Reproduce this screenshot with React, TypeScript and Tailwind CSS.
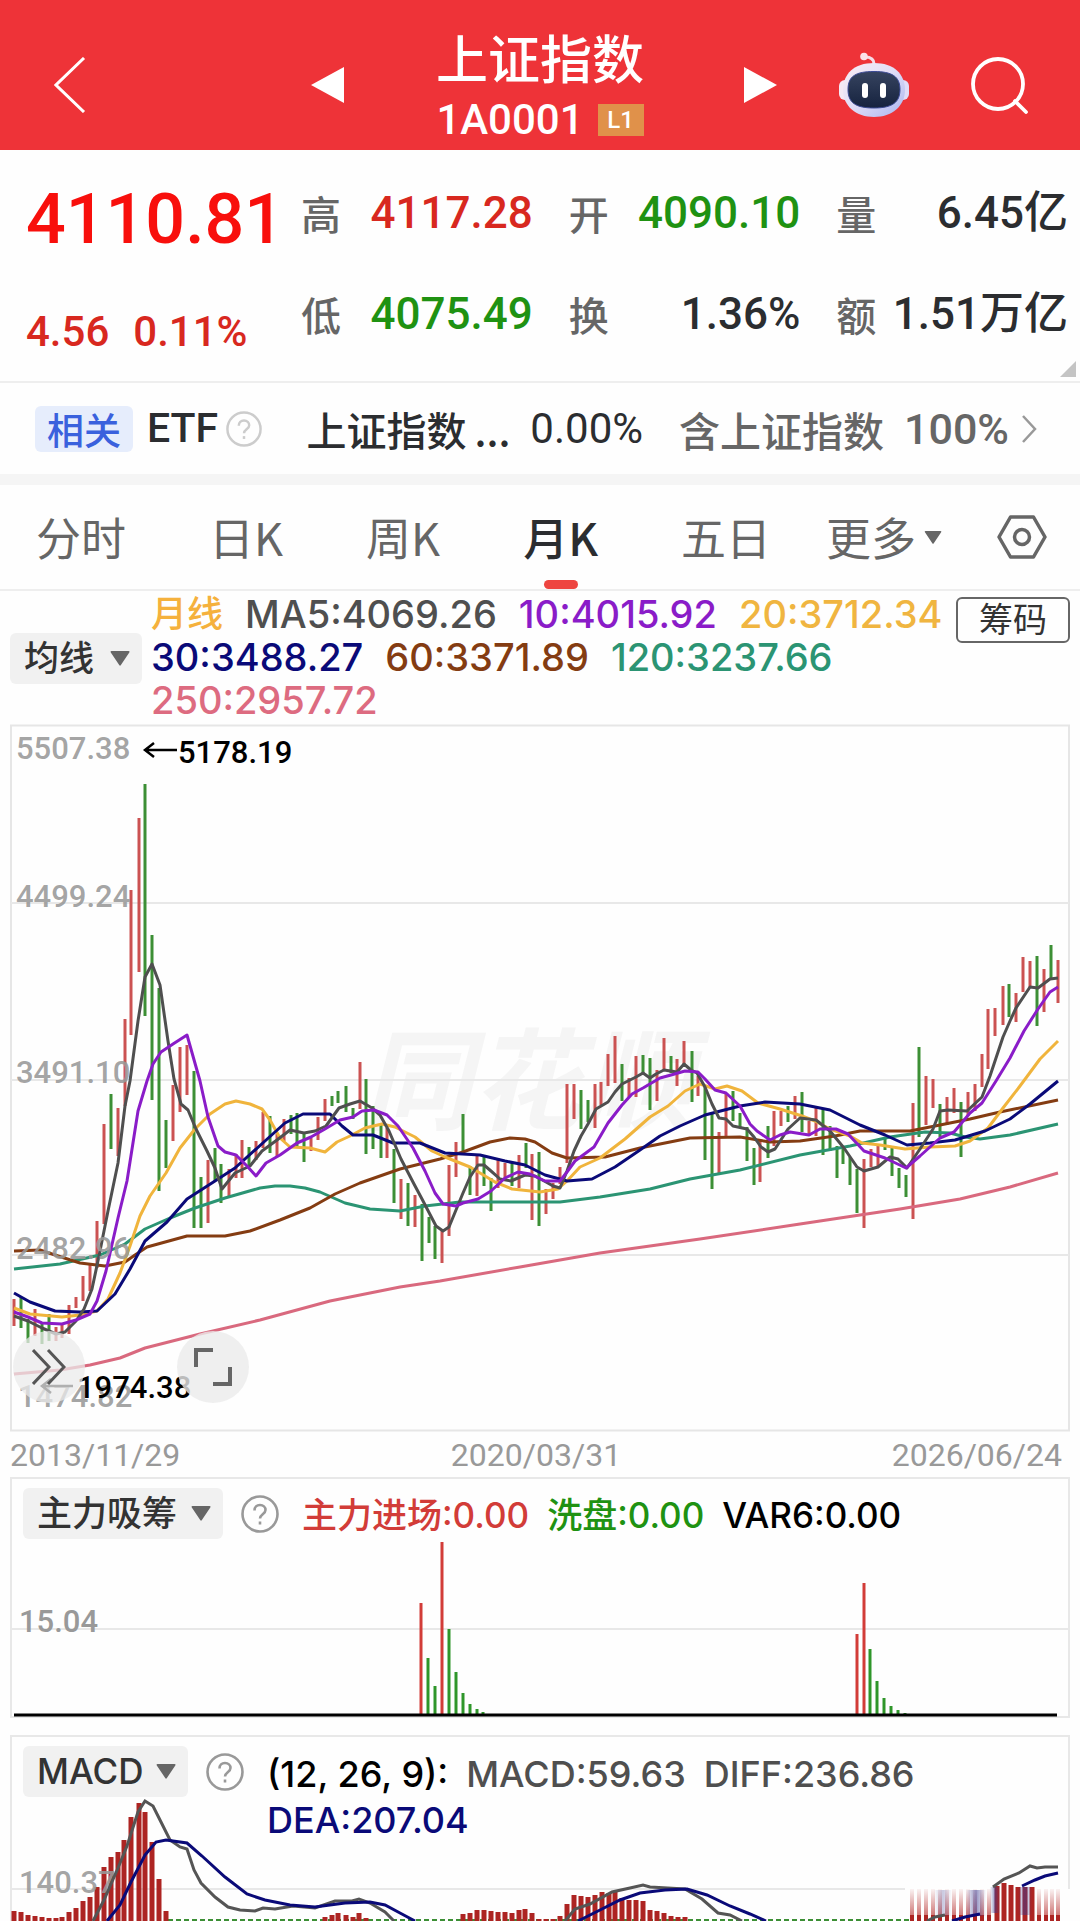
import type { ReactNode } from "react";

const DIN = "font-['Roboto','Noto_Sans_CJK_SC',sans-serif]";
const SANS = "font-['Inter','Noto_Sans_CJK_SC',sans-serif]";
const HAN = "font-['Noto_Sans_CJK_SC',sans-serif]";

type Bar = [x: number, top: number, bottom: number];
type Spike = [x: number, top: number];

const quotes = [
  { label: "高", value: "4117.28", color: "text-[#d8281f]" },
  { label: "开", value: "4090.10", color: "text-[#1f9212]" },
  { label: "量", value: "6.45亿", color: "text-[#2b2d30]" },
  { label: "低", value: "4075.49", color: "text-[#1f9212]" },
  { label: "换", value: "1.36%", color: "text-[#2b2d30]" },
  { label: "额", value: "1.51万亿", color: "text-[#2b2d30]" },
];

const tabs = ["分时", "日K", "周K", "月K", "五日"];

const upBars: Bar[] = [
  [14, 1298, 1325], [35, 1308, 1335], [56, 1326, 1340], [62, 1322, 1337], [69, 1304, 1333], [76, 1296, 1307],
  [83, 1275, 1300], [90, 1262, 1290], [97, 1220, 1267], [104, 1123, 1223], [118, 1107, 1155], [125, 1018, 1105],
  [131, 889, 1034], [139, 817, 971], [173, 1084, 1140], [180, 1046, 1111], [187, 1044, 1094], [208, 1159, 1222],
  [229, 1168, 1196], [236, 1153, 1177], [242, 1139, 1177], [256, 1140, 1159], [263, 1111, 1147], [277, 1133, 1155],
  [284, 1118, 1140], [311, 1137, 1150], [318, 1116, 1139], [325, 1098, 1120], [360, 1061, 1108], [387, 1127, 1157],
  [401, 1178, 1218], [415, 1194, 1226], [442, 1230, 1262], [449, 1164, 1235], [456, 1141, 1176], [477, 1155, 1195],
  [498, 1157, 1187], [505, 1162, 1180], [519, 1154, 1187], [532, 1153, 1219], [546, 1188, 1213], [553, 1182, 1198],
  [560, 1166, 1183], [567, 1083, 1162], [574, 1083, 1118], [595, 1083, 1127], [601, 1081, 1104], [608, 1053, 1085],
  [615, 1035, 1082], [629, 1077, 1096], [636, 1055, 1096], [657, 1069, 1100], [664, 1037, 1070], [677, 1058, 1085],
  [684, 1040, 1066], [698, 1075, 1095], [719, 1131, 1172], [726, 1092, 1135], [760, 1140, 1181], [774, 1110, 1145],
  [781, 1110, 1125], [795, 1095, 1118], [809, 1120, 1135], [816, 1107, 1135], [864, 1158, 1227], [871, 1148, 1166],
  [878, 1145, 1166], [913, 1102, 1218], [926, 1075, 1124], [933, 1078, 1107], [947, 1096, 1124], [954, 1087, 1112],
  [968, 1091, 1115], [975, 1083, 1110], [982, 1053, 1086], [988, 1008, 1068], [995, 1007, 1035], [1003, 985, 1024],
  [1016, 992, 1021], [1023, 956, 991], [1030, 960, 987], [1044, 968, 1011], [1058, 959, 1002],
];

const downBars: Bar[] = [
  [21, 1296, 1327], [28, 1318, 1342], [42, 1322, 1343], [49, 1313, 1340], [111, 1093, 1148], [145, 783, 1015],
  [152, 934, 1099], [159, 987, 1190], [166, 1119, 1167], [194, 1070, 1227], [201, 1176, 1227], [215, 1147, 1180],
  [221, 1163, 1202], [249, 1146, 1165], [270, 1115, 1152], [291, 1114, 1133], [297, 1112, 1147], [304, 1133, 1161],
  [332, 1095, 1105], [338, 1090, 1102], [346, 1085, 1111], [353, 1107, 1118], [366, 1078, 1153], [373, 1105, 1148],
  [381, 1124, 1157], [394, 1148, 1202], [408, 1182, 1225], [422, 1203, 1260], [429, 1216, 1242], [435, 1225, 1258],
  [463, 1113, 1154], [470, 1165, 1194], [484, 1155, 1185], [491, 1177, 1210], [512, 1162, 1185], [526, 1142, 1167],
  [539, 1151, 1225], [581, 1089, 1128], [588, 1099, 1121], [622, 1063, 1100], [643, 1054, 1073], [650, 1057, 1109],
  [671, 1055, 1072], [692, 1050, 1101], [705, 1085, 1159], [712, 1112, 1188], [733, 1090, 1120], [740, 1112, 1127],
  [747, 1126, 1160], [754, 1147, 1184], [768, 1125, 1157], [788, 1105, 1121], [802, 1091, 1131], [823, 1108, 1154],
  [830, 1125, 1150], [837, 1145, 1177], [843, 1147, 1163], [850, 1156, 1184], [857, 1168, 1212], [885, 1136, 1149],
  [892, 1147, 1175], [899, 1167, 1187], [906, 1174, 1196], [919, 1046, 1136], [940, 1103, 1136], [961, 1101, 1156],
  [1009, 983, 1016], [1037, 955, 1025], [1051, 944, 977],
];

const averages = [
  {
    color: "#d9697e",
    points:
      "14,1373 60,1369 90,1364 120,1357 145,1347 200,1333 260,1319 330,1300 400,1286 440,1280 520,1266 600,1252 700,1238 800,1223 900,1208 960,1198 1010,1186 1058,1172",
  },
  {
    color: "#2b9473",
    points:
      "14,1268 60,1263 100,1254 125,1243 145,1228 170,1217 195,1207 225,1197 260,1187 275,1185 290,1185 305,1187 320,1191 345,1202 370,1208 400,1210 425,1205 460,1201 510,1201 560,1201 600,1196 650,1188 690,1178 740,1169 800,1154 850,1145 890,1136 925,1131 950,1132 965,1136 980,1138 1010,1134 1058,1123",
  },
  {
    color: "#843c12",
    points:
      "14,1250 40,1249 55,1254 80,1262 105,1265 125,1261 135,1254 147,1246 187,1235 225,1235 250,1230 280,1219 310,1207 335,1193 360,1182 400,1168 440,1158 463,1151 490,1141 510,1137 525,1138 535,1141 552,1152 567,1157 605,1156 640,1147 690,1137 740,1136 770,1141 800,1140 835,1135 860,1130 910,1130 940,1124 970,1118 1000,1111 1058,1099",
  },
  {
    color: "#f0b43c",
    points:
      "14,1307 30,1313 62,1316 80,1314 97,1310 108,1298 120,1272 130,1245 140,1215 150,1195 166,1172 180,1147 195,1128 210,1113 225,1103 236,1100 250,1103 262,1108 270,1119 280,1137 290,1146 310,1147 325,1151 337,1141 350,1135 365,1127 382,1123 395,1126 415,1136 432,1150 445,1156 470,1166 495,1181 512,1188 540,1191 558,1188 567,1180 580,1166 600,1157 625,1138 650,1116 668,1105 685,1090 700,1083 715,1088 727,1085 742,1090 758,1102 780,1108 802,1115 815,1120 830,1128 850,1135 862,1142 880,1144 905,1148 930,1146 955,1145 970,1140 988,1127 1003,1107 1020,1085 1040,1058 1058,1040",
  },
  {
    color: "#0a0a78",
    points:
      "14,1292 30,1301 55,1310 80,1311 97,1310 115,1293 130,1268 145,1240 167,1221 187,1198 215,1180 235,1167 265,1140 285,1122 303,1113 330,1113 342,1125 353,1134 373,1134 393,1142 420,1142 445,1152 480,1154 505,1160 525,1164 545,1174 567,1180 592,1178 615,1166 640,1149 660,1135 680,1125 705,1114 740,1105 765,1101 800,1103 830,1109 860,1124 885,1134 907,1144 930,1142 955,1139 985,1130 1010,1118 1030,1103 1058,1080",
  },
  {
    color: "#4f4f4f",
    points:
      "14,1315 28,1320 42,1327 56,1333 65,1331 76,1320 84,1308 92,1288 99,1255 108,1210 118,1162 125,1105 130,1080 138,1020 145,976 152,963 160,984 168,1040 174,1078 181,1103 188,1109 196,1128 207,1150 215,1167 222,1188 235,1172 250,1165 262,1150 277,1139 290,1129 304,1132 315,1130 326,1125 339,1107 350,1103 360,1100 372,1107 380,1114 389,1130 401,1158 414,1183 422,1198 436,1225 443,1230 449,1226 456,1209 463,1192 470,1176 478,1164 484,1164 491,1170 500,1178 511,1180 525,1174 535,1175 546,1181 553,1185 560,1187 567,1170 574,1150 581,1135 588,1123 596,1108 608,1101 615,1091 622,1083 636,1076 643,1072 650,1077 656,1073 664,1069 677,1071 684,1063 691,1069 697,1072 705,1086 712,1103 719,1117 726,1118 733,1125 747,1128 754,1136 761,1146 768,1151 775,1148 788,1128 800,1117 816,1119 830,1130 844,1147 857,1166 864,1170 878,1166 890,1156 898,1158 907,1167 920,1148 933,1128 940,1110 948,1109 967,1110 982,1096 990,1075 996,1057 1003,1036 1010,1020 1016,1007 1030,986 1038,987 1050,978 1058,977",
  },
  {
    color: "#8a1cc8",
    points:
      "14,1311 28,1316 42,1322 62,1323 76,1319 90,1313 97,1300 106,1270 118,1217 127,1180 138,1110 147,1080 153,1063 161,1051 173,1043 187,1034 200,1080 208,1116 218,1145 225,1151 236,1154 247,1165 256,1175 266,1162 280,1154 297,1142 311,1136 325,1128 340,1119 353,1116 362,1110 374,1109 387,1114 398,1125 413,1147 425,1170 435,1192 443,1203 456,1205 463,1202 478,1198 491,1190 505,1177 518,1171 530,1173 545,1180 560,1180 567,1171 575,1160 594,1146 608,1122 622,1104 632,1093 643,1087 660,1077 671,1074 685,1070 698,1071 705,1078 715,1089 726,1092 740,1105 750,1123 757,1130 770,1139 780,1134 790,1131 809,1134 820,1128 836,1128 848,1133 864,1150 885,1157 906,1167 920,1155 940,1137 954,1131 970,1112 982,1102 996,1080 1010,1057 1024,1030 1038,1008 1050,991 1058,986",
  },
];

const inflow: Spike[] = [[421, 1603], [442, 1542], [857, 1634], [864, 1583]];
const washout: Spike[] = [
  [428, 1658], [435, 1686], [449, 1629], [456, 1672], [463, 1693], [470, 1704], [477, 1709], [483, 1712],
  [870, 1649], [877, 1681], [884, 1698], [891, 1706], [898, 1710], [905, 1713],
];

const macdBars: Spike[] = [
  [14, 1911], [21, 1912], [28, 1915], [35, 1916], [42, 1917], [49, 1918], [56, 1918], [62, 1917], [69, 1912],
  [76, 1908], [83, 1901], [90, 1897], [97, 1887], [104, 1867], [111, 1857], [118, 1852], [124, 1840], [131, 1817],
  [139, 1803], [145, 1812], [152, 1842], [159, 1879], [166, 1911],
  [325, 1917], [332, 1915], [338, 1913], [346, 1915], [353, 1917], [359, 1913], [366, 1918],
  [463, 1914], [470, 1913], [477, 1910], [484, 1910], [491, 1911], [498, 1912], [505, 1912], [512, 1913],
  [519, 1910], [525, 1909], [532, 1913], [539, 1919], [546, 1919], [553, 1919], [560, 1916], [567, 1904],
  [574, 1895], [581, 1896], [588, 1897], [595, 1895], [602, 1892], [609, 1893], [615, 1892], [622, 1898],
  [629, 1900], [636, 1900], [643, 1901], [650, 1910], [657, 1911], [664, 1913], [671, 1916], [678, 1917], [685, 1917],
  [997, 1886], [1004, 1883], [1011, 1885], [1018, 1887], [1025, 1887], [1032, 1887],
];
const fadedBars = [912, 919, 926, 933, 940, 947, 954, 961, 968, 975, 982, 989, 1039, 1046, 1052, 1058];

const diffLines = [
  "93,1921 104,1900 118,1868 127,1846 138,1812 145,1801 153,1806 160,1820 170,1840 180,1847 187,1849 194,1870 201,1883 215,1897 228,1907 240,1910 255,1911 263,1908 275,1909 293,1906 315,1908 335,1901 352,1901 359,1899 370,1903 385,1912 394,1921",
  "565,1921 575,1909 590,1904 612,1892 630,1888 643,1885 650,1887 685,1889 702,1899 718,1913 730,1915 742,1921",
  "927,1921 935,1917 945,1915",
  "993,1887 1004,1879 1019,1873 1030,1866 1037,1868 1045,1867 1058,1867",
];
const deaLines = [
  "107,1921 120,1905 131,1882 145,1855 156,1842 166,1840 187,1843 202,1856 225,1877 247,1894 265,1900 290,1905 315,1907 345,1903 370,1902 385,1905 400,1913 415,1921",
  "578,1921 600,1910 620,1900 640,1893 665,1890 687,1889 707,1895 730,1906 750,1914 766,1921",
  "952,1921 965,1917 980,1914",
  "1022,1886 1035,1880 1045,1876 1058,1873",
];

const barPath = (bars: Bar[]) => bars.map(([x, top, bottom]) => `M${x} ${top}V${bottom}`).join("");
const spikePath = (bars: Spike[], base: number) => bars.map(([x, top]) => `M${x} ${top}V${base}`).join("");

function Caret({ className }: { className: string }) {
  return (
    <svg viewBox="0 0 20 16" className={className} aria-hidden="true">
      <path d="M1.5 1h17a1 1 0 0 1 .8 1.5l-8.4 12.6a1 1 0 0 1-1.7 0L.8 2.5A1 1 0 0 1 1.500 1z" fill="#666" />
    </svg>
  );
}

function HelpIcon({ color, className }: { color: string; className: string }) {
  return (
    <svg viewBox="0 0 38 38" className={className} fill="none" stroke={color} strokeWidth="2.600" aria-hidden="true">
      <circle cx="19" cy="19" r="17.500" />
      <path d="M13.500 15.500c0-3.300 2.300-5.500 5.500-5.500s5.500 2.100 5.500 5c0 4.200-5.500 4.400-5.500 8.500" />
      <path d="M19 26.500v3" />
    </svg>
  );
}

function Picker({ label, name, width }: { label: string; name: string; width: string }) {
  return (
    <div className={`relative h-[51px] shrink-0 ${width}`}>
      <select
        aria-label={name}
        className={`${SANS} h-full w-full appearance-none rounded-md bg-[#f1f1f1] pl-[14px] text-[35px] leading-[51px] font-medium text-[#333]`}
      >
        <option>{label}</option>
      </select>
      <Caret className="pointer-events-none absolute top-[17px] right-3 h-4 w-5" />
    </div>
  );
}

function Header() {
  return (
    <header className="grid h-[150px] grid-cols-[1fr_auto_1fr] bg-[#ee3338] text-white">
      <div className="flex items-center justify-between pt-5 pr-[92px] pl-[54px]">
        <button aria-label="返回">
          <svg viewBox="0 0 32 56" className="h-14 w-8" fill="none" stroke="#fff" strokeWidth="3">
            <path d="M30 1 2 28l28 27" />
          </svg>
        </button>
        <button aria-label="上一个">
          <svg viewBox="0 0 33 36" className="h-9 w-[33px]" fill="#fff">
            <path d="M33 0v36L0 18z" />
          </svg>
        </button>
      </div>
      <div className="flex flex-col items-center pt-6">
        <h1 className={`${HAN} text-[52px] leading-[66px] font-medium`}>上证指数</h1>
        <div className="flex items-center gap-[14px]">
          <span className={`${DIN} text-[42px] leading-[60px] font-medium`}>1A0001</span>
          <span className={`${DIN} flex h-8 w-[46px] items-center justify-center bg-[#e0914a] text-2xl font-medium`}>L1</span>
        </div>
      </div>
      <div className="flex items-center justify-between pt-5 pr-[51px] pl-[100px]">
        <button aria-label="下一个">
          <svg viewBox="0 0 33 36" className="h-9 w-[33px]" fill="#fff">
            <path d="M0 0v36l33-18z" />
          </svg>
        </button>
        <button aria-label="智能助手">
          <svg viewBox="0 0 70 66" className="h-[66px] w-[70px]">
            <defs>
              <linearGradient id="shell" x1="0" y1="0" x2="1" y2="1">
                <stop offset="0" stopColor="#fbeef4" />
                <stop offset="0.500" stopColor="#dfdcf6" />
                <stop offset="1" stopColor="#a9b4f0" />
              </linearGradient>
              <linearGradient id="visor" x1="0" y1="0" x2="0" y2="1">
                <stop offset="0" stopColor="#36435f" />
                <stop offset="1" stopColor="#16233f" />
              </linearGradient>
            </defs>
            <path d="M35 12c0-5-3-7-9-7" fill="none" stroke="#f6dbe6" strokeWidth="3" />
            <circle cx="25" cy="4.500" r="3.800" fill="#fbe3ea" />
            <rect x="0" y="28" width="12" height="20" rx="6" fill="#f4e8f4" />
            <rect x="58" y="28" width="12" height="20" rx="6" fill="#e0dcf8" />
            <path d="M35 11c20 0 31 11 31 27S53 65 35 65 4 54 4 38s11-27 31-27z" fill="url(#shell)" />
            <path d="M35 19.500c18 0 26 5 26 18S53 56 35 56 9 51 9 37.500s8-18 26-18z" fill="url(#visor)" stroke="#3b4a94" strokeWidth="1" />
            <rect x="23" y="31" width="6" height="15" rx="3" fill="#fff" />
            <rect x="41" y="31" width="6" height="15" rx="3" fill="#fff" />
          </svg>
        </button>
        <button aria-label="搜索">
          <svg viewBox="0 0 58 57" className="h-[57px] w-[58px]" fill="none" stroke="#fff" strokeWidth="3.800">
            <circle cx="27" cy="27" r="25" />
            <path d="m44 44 11 11" strokeLinecap="round" />
          </svg>
        </button>
      </div>
    </header>
  );
}

function QuotePanel() {
  return (
    <section className={`${DIN} relative flex h-[233px] border-b-2 border-[#eeeeee] pt-3 pr-3 pl-[26px] font-medium`}>
      <div className="w-[275px] shrink-0">
        <div className="text-[70px] leading-[114px] text-[#f80f0c]">4110.81</div>
        <div className="flex gap-[24px] text-[42px] leading-[112px] text-[#d8281f]">
          <span>4.56</span>
          <span>0.11%</span>
        </div>
      </div>
      <dl className="grid flex-1 grid-cols-3 gap-x-9 self-start">
        {quotes.map((quote) => (
          <div key={quote.label} className="flex h-[101px] items-center justify-between">
            <dt className={`${HAN} text-[40px] leading-[56px] font-medium text-[#666]`}>{quote.label}</dt>
            <dd className={`text-[44px] leading-[56px] whitespace-nowrap ${quote.color}`}>{quote.value}</dd>
          </div>
        ))}
      </dl>
      <svg viewBox="0 0 16 16" className="absolute right-1 bottom-1 h-4 w-4" aria-hidden="true">
        <path d="M16 0v16H0z" fill="#c4c4c4" />
      </svg>
    </section>
  );
}

function RelatedRow() {
  return (
    <section className={`${DIN} flex h-[102px] items-center border-b-[11px] border-[#f5f5f5] pr-[43px] pl-[35px] text-[#2b2d30]`}>
      <span className={`${HAN} rounded-md bg-[#e6edfc] px-3 text-[37px] leading-[46px] font-medium text-[#3a61dd]`}>相关</span>
      <span className="ml-[14px] text-[41px] font-medium">ETF</span>
      <HelpIcon color="#ccc" className="ml-2 h-9 w-9" />
      <a href="#etf" className="ml-auto flex items-center gap-5">
        <span className={`${HAN} flex gap-2 text-[40px] leading-[56px] font-medium`}>
          上证指数<span>...</span>
        </span>
        <span className="text-[42px] leading-[56px]">0.00%</span>
      </a>
      <a href="#holding" className="ml-9 flex items-center text-[#666]">
        <span className={`${HAN} text-[41px] leading-[56px] font-medium`}>含上证指数</span>
        <span className="ml-5 text-[43px] leading-[56px] font-medium">100%</span>
        <svg viewBox="0 0 16 28" className="ml-3 h-7 w-4" fill="none" stroke="#999" strokeWidth="2.500">
          <path d="m2 1 12 13L2 27" />
        </svg>
      </a>
    </section>
  );
}

function PeriodTabs() {
  return (
    <nav className={`${HAN} flex h-[106px] items-center justify-between border-b-2 border-[#eeeeee] pr-[33px] pl-[36px] text-[45px] text-[#666]`}>
      <div className="flex h-full gap-[83px]">
        {tabs.map((tab) => (
          <button
            key={tab}
            className={tab === "月K" ? "relative font-medium text-[#2b2d30]" : "relative"}
          >
            {tab}
            {tab === "月K" && (
              <span className="absolute bottom-0 left-1/2 h-[9px] w-[34px] -translate-x-1/2 rounded-full bg-[#ee4540]" />
            )}
          </button>
        ))}
      </div>
      <button className="flex items-center gap-2">
        更多
        <Caret className="h-[14px] w-[18px]" />
      </button>
      <button aria-label="设置">
        <svg viewBox="0 0 50 46" className="h-[46px] w-[50px]" fill="none" stroke="#666" strokeWidth="3.500">
          <path d="M13.500 3h23L48 23 36.500 43h-23L2 23z" strokeLinejoin="round" />
          <circle cx="25" cy="23" r="7.500" />
        </svg>
      </button>
    </nav>
  );
}

function AverageLegend() {
  return (
    <section className={`${SANS} flex h-[133px] px-[10px] pt-[2px] text-[38px] leading-[43px] font-medium`}>
      <div className="pt-[40px]">
        <Picker label="均线" name="主图指标" width="w-[132px]" />
      </div>
      <div className="ml-[9px] flex flex-1 flex-col whitespace-nowrap">
        <div className="flex gap-[22px]">
          <span className="text-[36px] text-[#f5b13c]">月线</span>
          <span className="text-[#4f4f4f]">MA5:4069.26</span>
          <span className="text-[#8a1cc8]">10:4015.92</span>
          <span className="text-[#f0b540]">20:3712.34</span>
        </div>
        <div className="flex gap-[22px]">
          <span className="text-[#0a0a78]">30:3488.27</span>
          <span className="text-[#843c12]">60:3371.89</span>
          <span className="text-[#2b9473]">120:3237.66</span>
        </div>
        <div className="text-[#dd6b80]">250:2957.72</div>
      </div>
      <button className="mt-1 h-[46px] w-[114px] shrink-0 rounded-md border-2 border-[#666] text-[34px] leading-[42px] font-normal text-[#333]">
        筹码
      </button>
    </section>
  );
}

function PriceChart() {
  return (
    <section className="relative mx-[10px]">
      <svg viewBox="10 723 1060 708" className="block w-full" fill="none">
        <text x="362" y="1120" className={`${HAN} text-[110px] font-bold italic`} fill="#f5f5f5">同花顺</text>
        <rect x="11" y="724.500" width="1058" height="705" stroke="#e6e6e6" strokeWidth="2" />
        <path d="M11 902H1069M11 1079H1069M11 1254H1069" stroke="#e8e8e8" strokeWidth="2" />
        <path d={barPath(upBars)} stroke="#cb5252" strokeWidth="3" />
        <path d={barPath(downBars)} stroke="#3c8f35" strokeWidth="3" />
        {averages.map((line) => (
          <polyline key={line.color} points={line.points} stroke={line.color} strokeWidth="3" strokeLinejoin="round" />
        ))}
        <g className={`${DIN} text-[31px] font-medium`} fill="#999" fillOpacity="0.900">
          <text x="16" y="758">5507.38</text>
          <text x="16" y="906">4499.24</text>
          <text x="16" y="1082">3491.10</text>
          <text x="16" y="1258">2482.96</text>
          <text x="18" y="1406">1474.82</text>
        </g>
        <path d="M177 749H145m9-7-9 7 9 7M73 1385H42m9-7-9 7 9 7" stroke="#000" strokeWidth="2.500" />
        <g className={`${DIN} text-[31px] font-medium`} fill="#000">
          <text x="178" y="762">5178.19</text>
          <text x="77" y="1397">1974.38</text>
        </g>
      </svg>
      <button aria-label="展开" className="absolute bottom-[29px] left-[3px] flex h-[72px] w-[72px] items-center justify-center rounded-full bg-[#ebebeb]/75">
        <svg viewBox="0 0 34 36" className="h-9 w-[34px]" fill="none" stroke="#555" strokeWidth="3">
          <path d="m1 1 16 17L1 35M16 1l16 17-16 17" />
        </svg>
      </button>
      <button aria-label="全屏" className="absolute bottom-[29px] left-[167px] flex h-[72px] w-[72px] items-center justify-center rounded-full bg-[#ebebeb]/80">
        <svg viewBox="0 0 38 38" className="h-[38px] w-[38px]" fill="none" stroke="#666" strokeWidth="4">
          <path d="M2 19V2h17M36 19v17H19" />
        </svg>
      </button>
    </section>
  );
}

function IndicatorPanel({ header, children, viewBox }: { header: ReactNode; children: ReactNode; viewBox: string }) {
  return (
    <section className={`${SANS} mx-[10px] grid leading-[46px] font-medium`}>
      <svg viewBox={viewBox} className="col-start-1 row-start-1 block w-full" fill="none">
        {children}
      </svg>
      <div className="col-start-1 row-start-1 flex self-start pt-[11px] pl-[13px] whitespace-nowrap">{header}</div>
    </section>
  );
}

export default function App() {
  return (
    <main className="overflow-hidden bg-[#fefefe]">
      <Header />
      <QuotePanel />
      <RelatedRow />
      <PeriodTabs />
      <AverageLegend />
      <PriceChart />
      <div className={`${DIN} mx-[10px] flex h-[45px] items-center justify-between pr-2 text-[32px] text-[#999]`}>
        <span>2013/11/29</span>
        <span>2020/03/31</span>
        <span>2026/06/24</span>
      </div>
      <IndicatorPanel
        viewBox="10 1477 1060 241"
        header={
          <>
            <Picker label="主力吸筹" name="副图指标一" width="w-[200px]" />
            <HelpIcon color="#999" className="mt-[7px] ml-[18px] h-[38px] w-[38px]" />
            <div className="ml-[23px] flex gap-[18px] pt-[4px] text-[35px]">
              <span className="text-[#d23c38]">主力进场:0.00</span>
              <span className="text-[#1f9212]">洗盘:0.00</span>
              <span className="text-black">VAR6:0.00</span>
            </div>
          </>
        }
      >
        <rect x="11" y="1478" width="1058" height="239" stroke="#e8e8e8" strokeWidth="2" />
        <path d="M11 1629H1069" stroke="#e8e8e8" strokeWidth="2" />
        <text x="19" y="1632" className={`${DIN} text-[31px] font-medium`} fill="#999">15.04</text>
        <path d={spikePath(inflow, 1714)} stroke="#d23c38" strokeWidth="3" />
        <path d={spikePath(washout, 1714)} stroke="#2f962a" strokeWidth="3" />
        <path d="M14 1715H1057" stroke="#000" strokeWidth="3" />
      </IndicatorPanel>
      <div className="h-[17px]" />
      <IndicatorPanel
        viewBox="10 1735 1060 186"
        header={
          <>
            <Picker label="MACD" name="副图指标二" width="w-[165px]" />
            <HelpIcon color="#999" className="mt-[7px] ml-[18px] h-[38px] w-[38px]" />
            <div className="ml-[23px] pt-[5px] text-[36px]">
              <div className="flex gap-[18px] text-[#4f4f4f]">
                <span className="text-black">(12, 26, 9):</span>
                <span>MACD:59.63</span>
                <span>DIFF:236.86</span>
              </div>
              <div className="text-[#0a0a78]">DEA:207.04</div>
            </div>
          </>
        }
      >
        <defs>
          <linearGradient id="fade" x1="0" y1="0" x2="0" y2="1">
            <stop offset="0" stopColor="#b0201f" stopOpacity="0.050" />
            <stop offset="1" stopColor="#b0201f" stopOpacity="0.600" />
          </linearGradient>
          <linearGradient id="smear" x1="0" y1="0" x2="1" y2="0">
            <stop offset="0" stopColor="#3a3a90" stopOpacity="0" />
            <stop offset="0.500" stopColor="#3a3a90" stopOpacity="0.550" />
            <stop offset="1" stopColor="#3a3a90" stopOpacity="0" />
          </linearGradient>
        </defs>
        <path d="M11 1889V1736H1069V1889" stroke="#e8e8e8" strokeWidth="2" />
        <path d="M11 1889H905M11 1889V1921" stroke="#e8e8e8" strokeWidth="2" />
        <path d="M168 1920H910" stroke="#3c8f35" strokeWidth="2" strokeDasharray="5 3" />
        <path d={spikePath(macdBars, 1921)} stroke="#ad2422" strokeWidth="5" />
        {fadedBars.map((x) => (
          <g key={x}>
            <rect x={x - 2} y="1889" width="4" height="26" fill="url(#fade)" />
            <rect x={x - 2} y="1915" width="4" height="6" fill="#ad2422" />
          </g>
        ))}
        <rect x="934" y="1890" width="18" height="26" fill="url(#smear)" opacity="0.500" />
        <rect x="966" y="1890" width="20" height="26" fill="url(#smear)" />
        <rect x="990" y="1887" width="10" height="26" fill="url(#smear)" />
        <rect x="1018" y="1887" width="14" height="28" fill="url(#smear)" />
        <text x="19" y="1893" className={`${DIN} text-[31px] font-medium`} fill="#999" fillOpacity="0.900">140.37</text>
        {diffLines.map((points) => (
          <polyline key={points} points={points} stroke="#555" strokeWidth="3" />
        ))}
        {deaLines.map((points) => (
          <polyline key={points} points={points} stroke="#0a0a78" strokeWidth="3" />
        ))}
      </IndicatorPanel>
    </main>
  );
}
